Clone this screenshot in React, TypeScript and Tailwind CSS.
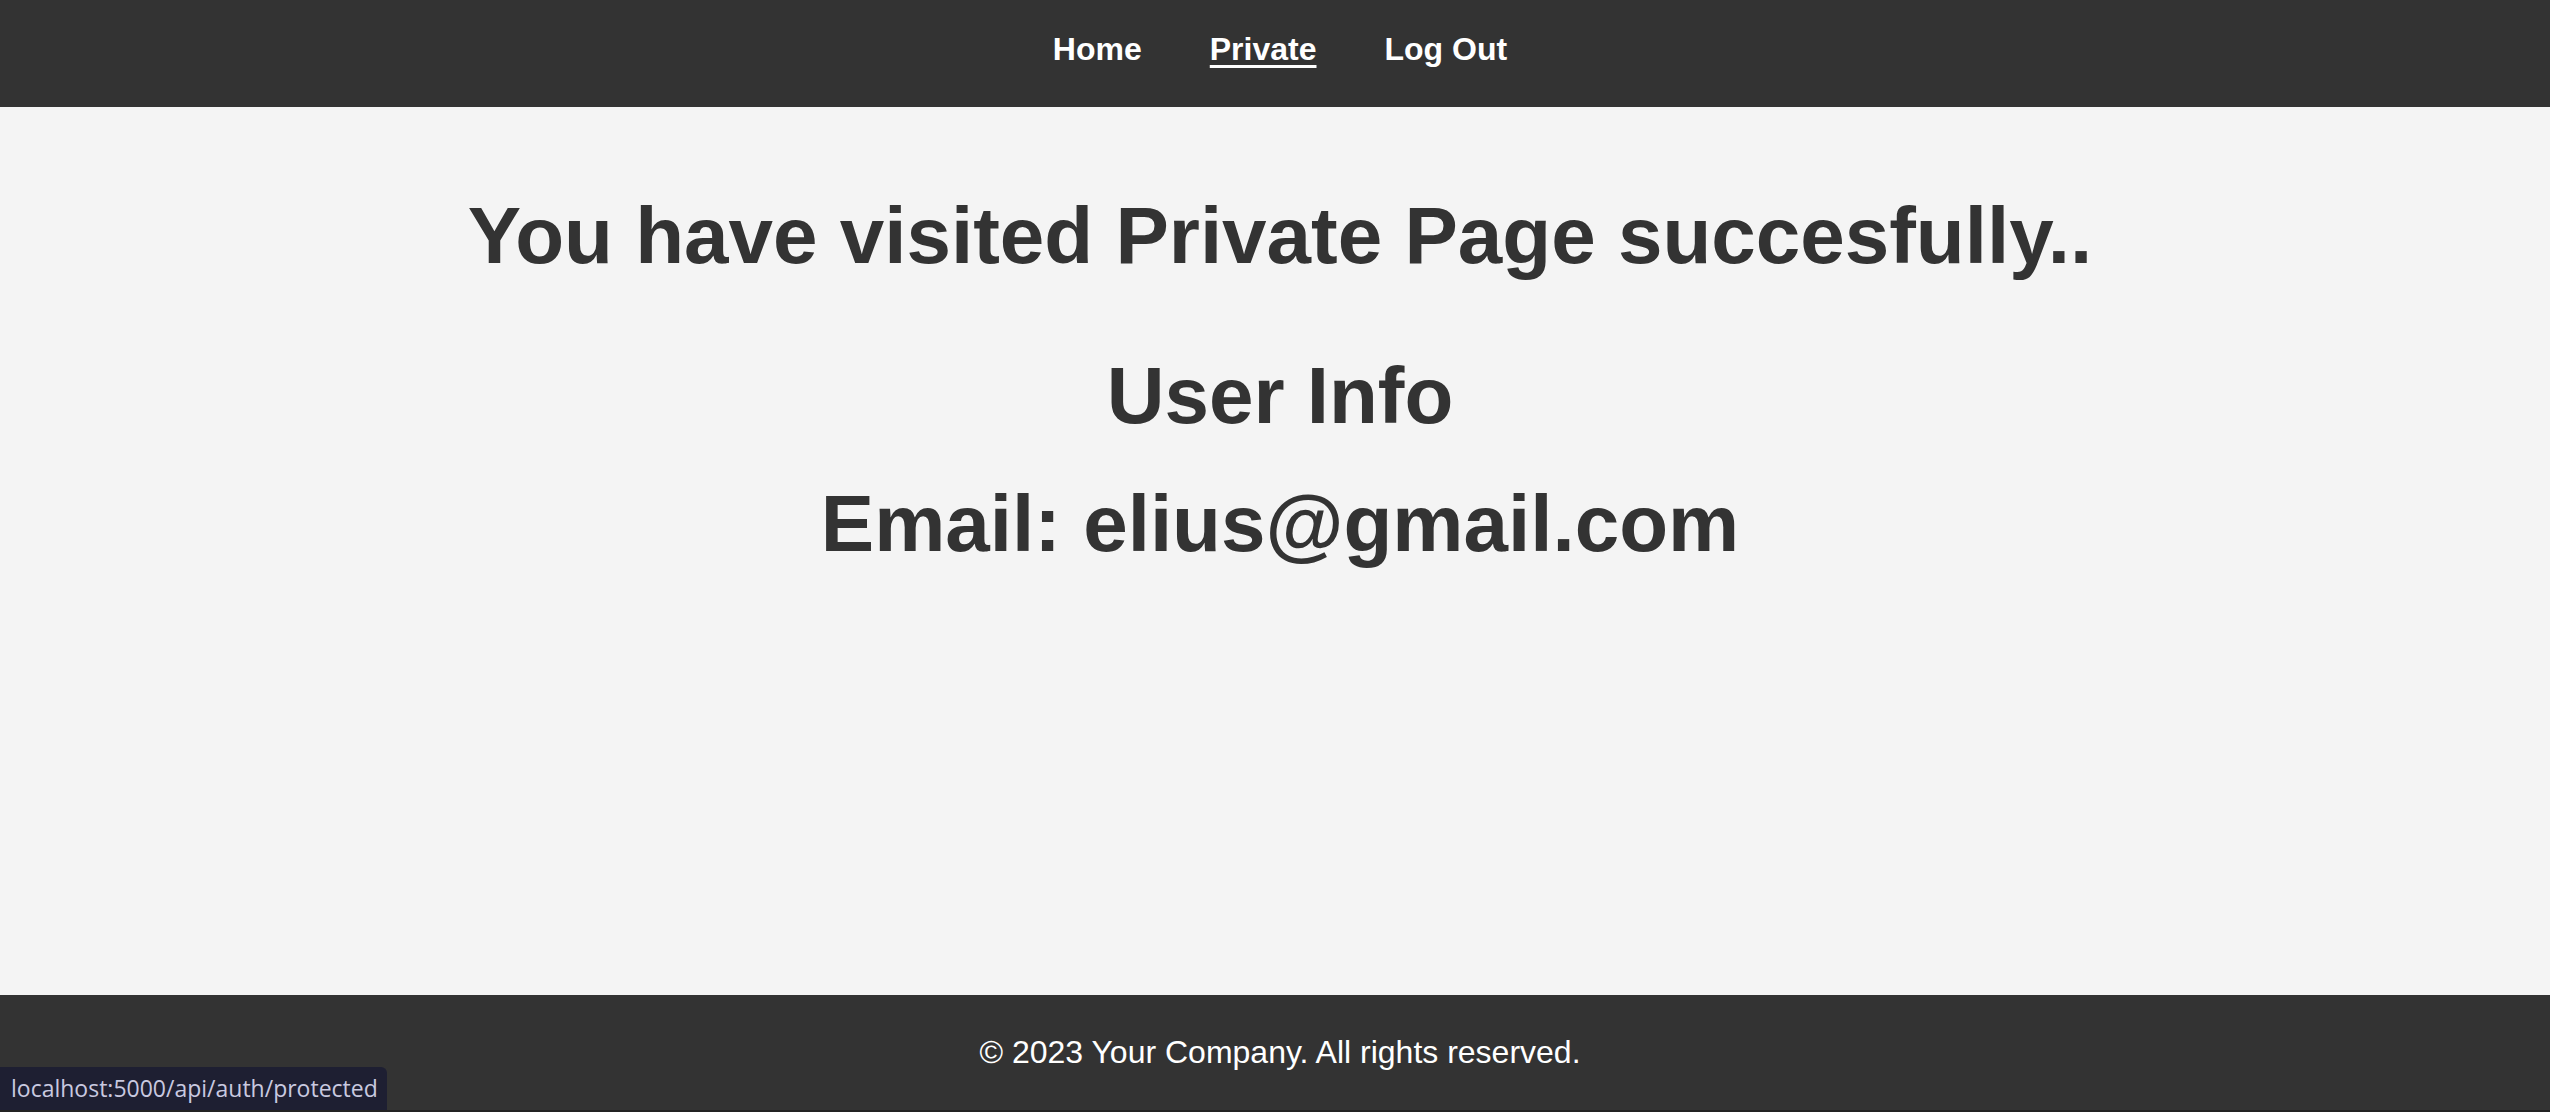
const links = [
  { label: 'Home', active: false },
  { label: 'Private', active: true },
  { label: 'Log Out', active: false },
];

export default function App() {
  return (
    <div
      className="relative min-h-screen flex flex-col bg-[#f4f4f4] text-[#333333]"
      style={{ fontFamily: '"Liberation Sans", Arial, sans-serif' }}
    >
      <header className="h-[107px] bg-[#333333] flex justify-center pt-[31px] pl-[10px]">
        <nav className="flex gap-[68px]">
          {links.map((link) => (
            <a
              key={link.label}
              href="#"
              className={`text-[32px] leading-[36px] font-bold text-white ${
                link.active ? 'underline decoration-[3px] underline-offset-[5px] text-[#f4f4f4]' : 'no-underline'
              }`}
            >
              {link.label}
            </a>
          ))}
        </nav>
      </header>

      <main className="flex-1 flex flex-col items-center pt-[83px] pl-[10px]">
        <h1 className="text-[80px] leading-[92px] font-bold">You have visited Private Page succesfully..</h1>
        <h2 className="mt-[68px] text-[80px] leading-[92px] font-bold">User Info</h2>
        <h2 className="mt-[36px] text-[80px] leading-[92px] font-bold">Email: elius@gmail.com</h2>
      </main>

      <footer className="h-[117px] bg-[#333333] flex justify-center pt-[39px] pl-[10px]">
        <p className="text-[32px] leading-[37px] text-white">© 2023 Your Company. All rights reserved.</p>
      </footer>

      {/* browser status bubble */}
      <div
        className="absolute left-0 bottom-[2px] h-[43px] w-[387px] rounded-tr-[6px] bg-[#1e1f32] flex items-center pl-[11px] text-[23px] text-[#c9c9e0]"
        style={{ fontFamily: '"Open Sans", "Noto Sans", sans-serif' }}
      >
        localhost:5000/api/auth/protected
      </div>
      <div className="absolute left-0 right-0 bottom-0 h-[2px] bg-[#232323]" />
    </div>
  );
}
